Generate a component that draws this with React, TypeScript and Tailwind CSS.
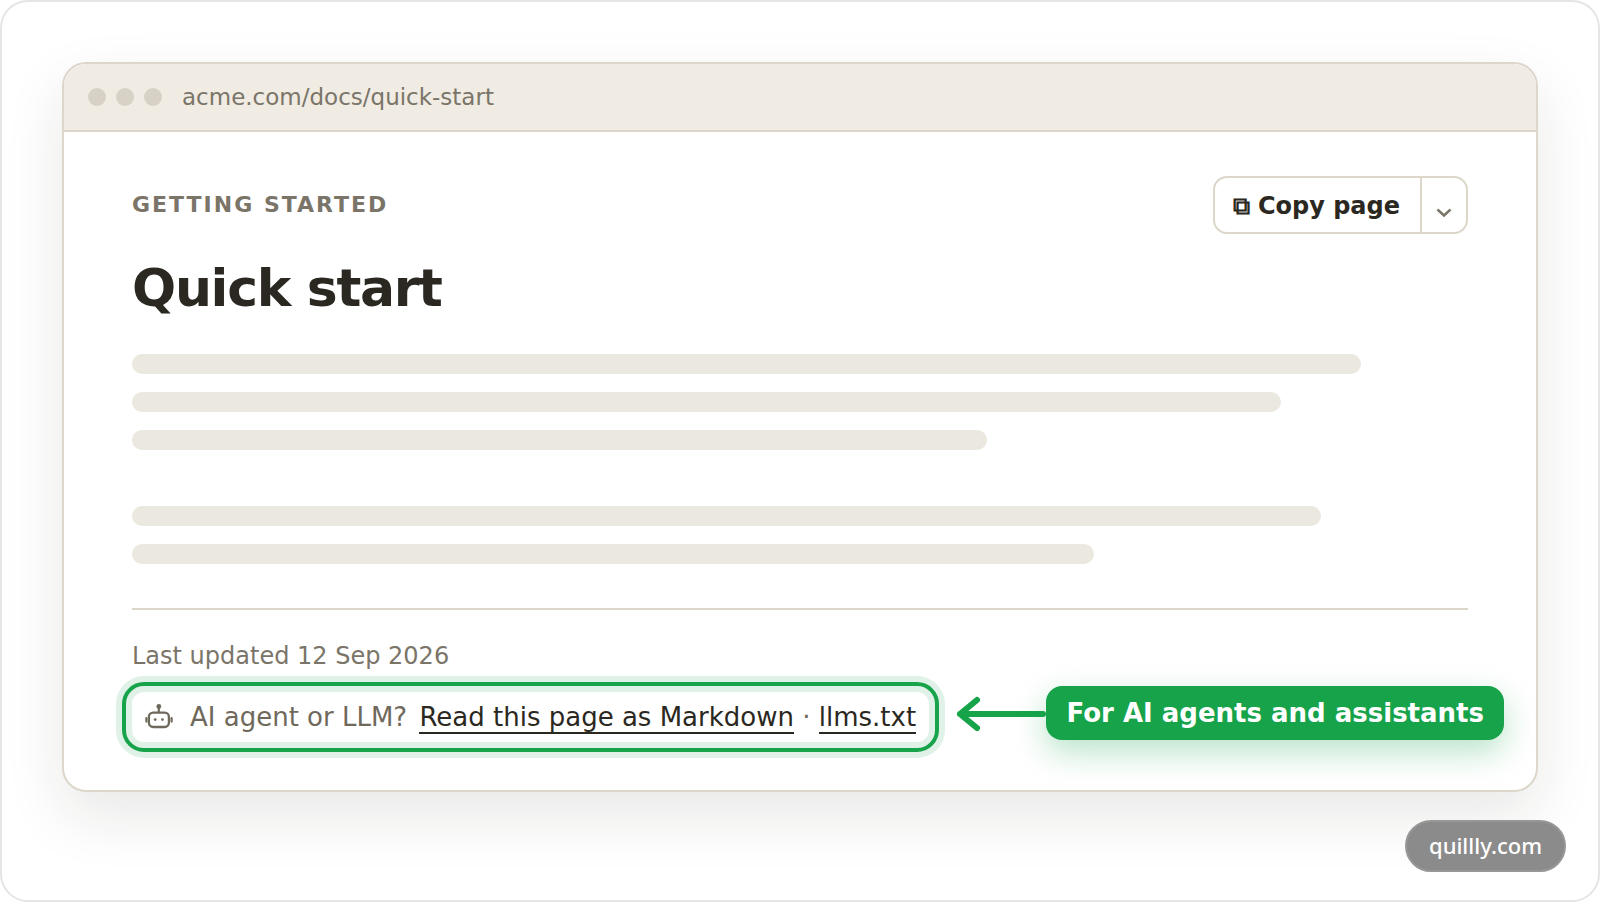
const paragraphs = [
  ["w-[92%]", "w-[86%]", "w-[64%]"],
  ["w-[89%]", "w-[72%]"],
];

function RobotIcon() {
  return (
    <svg className="w-7 h-7 shrink-0" viewBox="0 0 28 28" fill="none" aria-hidden="true">
      <circle cx="13.8" cy="3.4" r="2.4" fill="#6f695c" />
      <path d="M13.8 4v6" stroke="#6f695c" strokeWidth="2.2" />
      <rect x="3.9" y="9.6" width="20" height="14.4" rx="4.2" stroke="#6f695c" strokeWidth="2.3" />
      <path d="M1.4 15v3.6M26.6 15v3.6" stroke="#6f695c" strokeWidth="2.2" strokeLinecap="round" />
      <circle cx="10.2" cy="16.6" r="1.4" fill="#6f695c" />
      <circle cx="17.4" cy="16.6" r="1.4" fill="#6f695c" />
    </svg>
  );
}

function CopyButton() {
  return (
    <div className="flex border-2 border-[#dcd7ca] rounded-[14px] overflow-hidden">
      <button type="button" className="h-[54px] pt-[2px] pl-[18px] pr-5 text-2xl font-bold text-[#2b2821]">
        ⧉ Copy page
      </button>
      <button
        type="button"
        aria-label="More copy options"
        className="w-[46px] border-l-2 border-[#dcd7ca] flex items-center justify-center pt-4"
      >
        <svg className="w-4 h-4" viewBox="0 0 16 16" fill="none" aria-hidden="true">
          <path d="M1.5 4.5L8 10.5l6.500-6" stroke="#7a7568" strokeWidth="2.4" />
        </svg>
      </button>
    </div>
  );
}

export default function App() {
  return (
    <div className="bg-white border-2 border-[#e5e5e5] rounded-[28px] p-[60px] pb-7 font-['Verdana','DejaVu_Sans',sans-serif]">
      {/* Browser window */}
      <main className="border-2 border-[#dcd7ca] rounded-3xl bg-white shadow-[0_24px_60px_rgba(40,34,24,0.1)]">
        <div className="h-[68px] flex items-center gap-[10px] px-6 bg-[#f0ebe3] border-b-2 border-[#dcd7ca] rounded-t-[22px]">
          <span className="w-[18px] h-[18px] rounded-full bg-[#d8d2c6]" />
          <span className="w-[18px] h-[18px] rounded-full bg-[#d8d2c6]" />
          <span className="w-[18px] h-[18px] rounded-full bg-[#d8d2c6]" />
          <span className="ml-[10px] text-[23px] leading-7 text-[#7a7568]">acme.com/docs/quick-start</span>
        </div>

        <div className="px-[68px] pt-11 pb-[38px]">
          <div className="flex items-start justify-between">
            <div>
              <p className="mt-3 text-[22px] leading-[34px] font-bold tracking-[2px] text-[#7a7568]">GETTING STARTED</p>
              <h1 className="mt-[34px] text-[52px] leading-[64px] font-bold tracking-tight text-[#2b2821]">Quick start</h1>
            </div>
            <CopyButton />
          </div>

          {/* Placeholder text */}
          <div className="mt-[34px] flex flex-col gap-14">
            {paragraphs.map((lines, i) => (
              <div key={i} className="flex flex-col gap-[18px]">
                {lines.map((width) => (
                  <div key={width} className={`h-5 rounded-full bg-[#ebe8df] ${width}`} />
                ))}
              </div>
            ))}
          </div>

          <footer className="mt-11 border-t-2 border-[#dcd7ca] pt-[30px]">
            <p className="text-2xl leading-8 text-[#7a7568]">Last updated 12 Sep 2026</p>

            <div className="mt-[10px] -ml-[10px] -mr-9 flex items-start justify-between">
              <div className="h-[70px] flex items-center px-[19px] border-4 border-[#16a34a] rounded-[22px] shadow-[0_0_0_6px_#e0f2e7,inset_0_0_0_6px_#e0f2e7] text-[26px] leading-8 text-[#6f695c] whitespace-nowrap">
                <RobotIcon />
                <p className="ml-[17px]">
                  <span className="mr-1">AI agent or LLM?</span>{" "}
                  <a href="#markdown" className="text-[#2b2821] border-b-2 border-[#2b2821]">Read this page as Markdown</a>
                  {" · "}
                  <a href="#llms" className="text-[#2b2821] border-b-2 border-[#2b2821]">llms.txt</a>
                </p>
              </div>

              <div className="mt-1 flex items-center">
                <svg className="w-[90px] h-10" viewBox="0 0 90 40" fill="none" aria-hidden="true">
                  <path
                    d="M87 21H4M21 7L4 21l17 14"
                    stroke="#16a34a"
                    strokeWidth="6"
                    strokeLinecap="round"
                    strokeLinejoin="round"
                  />
                </svg>
                <div className="h-[54px] flex items-center px-5 rounded-2xl bg-[#16a34a] text-white text-[26px] leading-8 font-bold whitespace-nowrap shadow-[0_12px_32px_rgba(22,163,74,0.3)]">
                  For AI agents and assistants
                </div>
              </div>
            </div>
          </footer>
        </div>
      </main>

      <div className="mt-7 -mr-7 flex justify-end">
        <a
          href="#home"
          className="relative h-[52px] flex items-center px-[22px] pb-[2px] rounded-full border-2 border-[#979797] bg-[#8b8b8b] text-white text-[22px] leading-7 font-medium font-['Noto_Sans',sans-serif]"
        >
          quillly.com
        </a>
      </div>
    </div>
  );
}
